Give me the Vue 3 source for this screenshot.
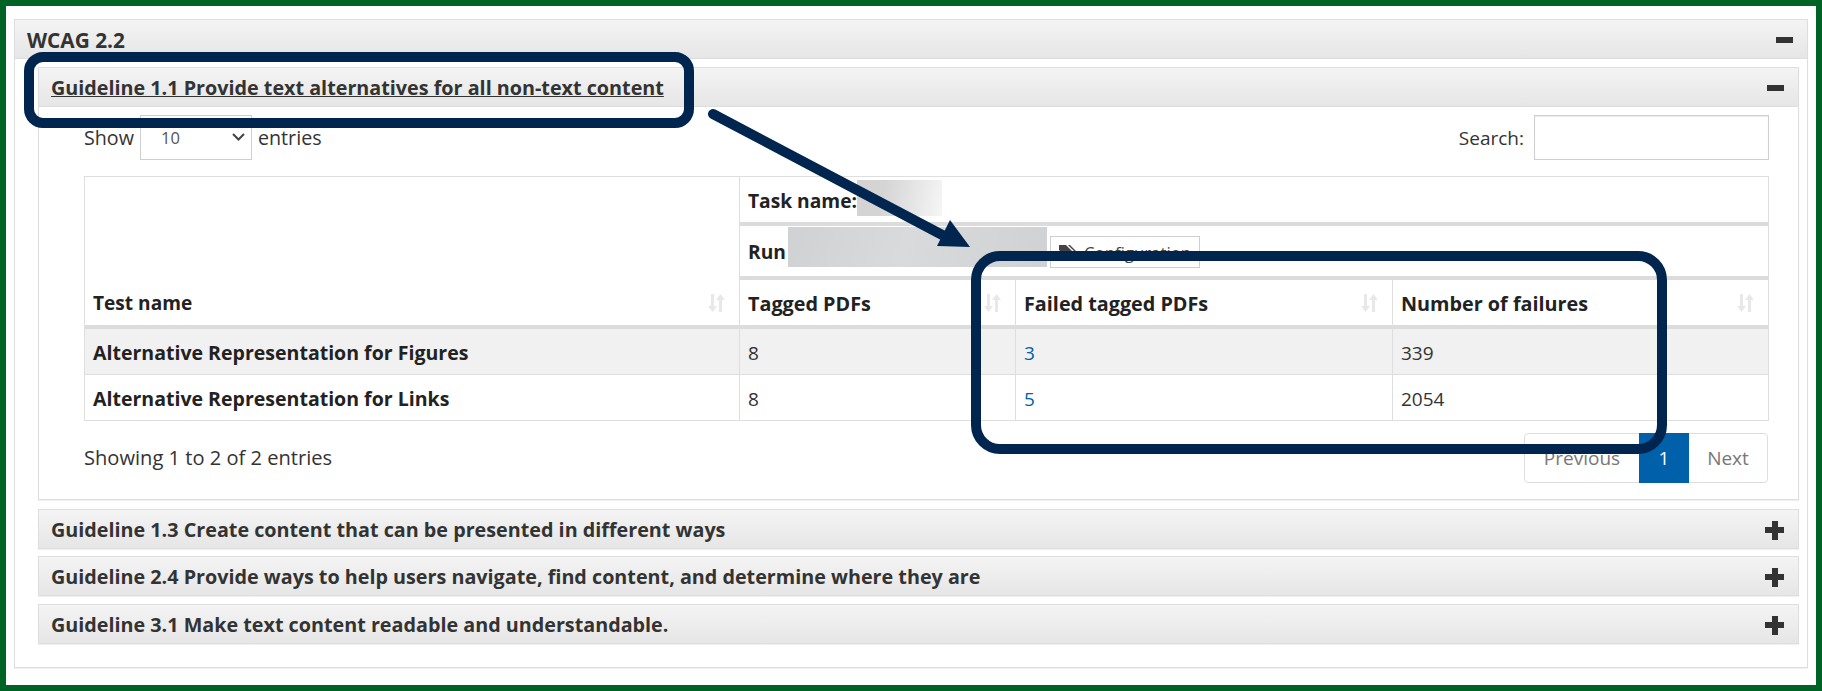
<script setup>
const closedPanels = [
  'Guideline 1.3 Create content that can be presented in different ways',
  'Guideline 2.4 Provide ways to help users navigate, find content, and determine where they are',
  'Guideline 3.1 Make text content readable and understandable.',
]

const rows = [
  { name: 'Alternative Representation for Figures', tagged: 8, failed: 3, failures: 339 },
  { name: 'Alternative Representation for Links', tagged: 8, failed: 5, failures: 2054 },
]
</script>

<template>
  <div class="page">
    <section class="panel outer">
      <header class="panel-head">
        <h2>WCAG 2.2</h2>
        <span class="minus"></span>
      </header>
      <div class="outer-body">
        <section class="panel inner">
          <header class="panel-head">
            <h3><a class="open-link">Guideline 1.1 Provide text alternatives for all non-text content</a></h3>
            <span class="minus"></span>
          </header>
          <div class="inner-body">
            <div class="controls">
              <label class="length">
                Show
                <span class="select-wrap">
                  <select class="select">
                    <option>10</option>
                  </select>
                  <svg class="chevron" viewBox="0 0 13 8" width="13" height="8">
                    <path d="M1 1l5.500 5.500L12 1" fill="none" stroke="#444" stroke-width="2" />
                  </svg>
                </span>
                entries
              </label>
              <label class="search">
                Search:
                <input class="search-input" type="text" />
              </label>
            </div>

            <table class="results">
              <colgroup>
                <col class="col-a" />
                <col class="col-b" />
                <col class="col-c" />
                <col class="col-d" />
              </colgroup>
              <thead>
                <tr class="task-row">
                  <th rowspan="3" class="test-head">
                    <div class="th-in test-title">
                      Test name
                      <svg class="sort" viewBox="0 0 17 18" width="17" height="18">
                        <path d="M3 0h3v12h3l-4.500 6L0 12h3zM11 18h3V6h3L12.500 0 8 6h3z" fill="#e8e8e8" />
                      </svg>
                    </div>
                  </th>
                  <th colspan="3">
                    <div class="meta">Task name:<span class="blur blur-task"></span></div>
                  </th>
                </tr>
                <tr class="run-row">
                  <th colspan="3">
                    <div class="meta run">
                      <span class="run-label">Run</span>
                      <span class="blur blur-run"></span>
                      <button class="config" type="button">
                        <svg viewBox="0 0 18 14" width="18" height="14">
                          <path d="M0 0h7l7 7-6 6-8-8zM9 0h2l7 7-6 6-1-1 5-5z" fill="#444" />
                        </svg>
                        Configuration
                      </button>
                    </div>
                  </th>
                </tr>
                <tr class="head-row">
                  <th v-for="title in ['Tagged PDFs', 'Failed tagged PDFs', 'Number of failures']" :key="title">
                    <div class="th-in">
                      {{ title }}
                      <svg class="sort" viewBox="0 0 17 18" width="17" height="18">
                        <path d="M3 0h3v12h3l-4.500 6L0 12h3zM11 18h3V6h3L12.500 0 8 6h3z" fill="#e8e8e8" />
                      </svg>
                    </div>
                  </th>
                </tr>
              </thead>
              <tbody>
                <tr v-for="row in rows" :key="row.name">
                  <td class="name">{{ row.name }}</td>
                  <td>{{ row.tagged }}</td>
                  <td><a class="link">{{ row.failed }}</a></td>
                  <td>{{ row.failures }}</td>
                </tr>
              </tbody>
            </table>

            <div class="table-foot">
              <span class="info">Showing 1 to 2 of 2 entries</span>
              <nav class="pager">
                <span class="prev">Previous</span>
                <span class="current">1</span>
                <span class="next">Next</span>
              </nav>
            </div>
          </div>
        </section>

        <section v-for="title in closedPanels" :key="title" class="panel closed">
          <header class="panel-head">
            <h3>{{ title }}</h3>
            <span class="plus"></span>
          </header>
        </section>
      </div>
    </section>

    <!-- annotations drawn on top of the screenshot -->
    <svg class="marks" viewBox="0 0 1822 691" width="1822" height="691">
      <rect x="29" y="57" width="660" height="66" rx="14" fill="none" stroke="#00264f" stroke-width="10" />
      <rect x="976" y="256" width="686" height="193" rx="24" fill="none" stroke="#00264f" stroke-width="10" />
      <path d="M713 114L948 238" fill="none" stroke="#00264f" stroke-width="10" stroke-linecap="round" />
      <path d="M950 220L970 247L937 246z" fill="#00264f" />
    </svg>
  </div>
</template>

<style>
html, body {
  margin: 0;
  background: #fff;
}
</style>

<style scoped>
.page {
  position: relative;
  box-sizing: border-box;
  width: 1822px;
  height: 691px;
  padding: 13px 8px 0;
  border: 6px solid #006325;
  background: #fff;
  overflow: hidden;
  font-family: "Open Sans", "Noto Sans", sans-serif;
  font-size: 19px;
  color: #333;
}

.panel {
  box-sizing: border-box;
}

.outer {
  height: 649px;
  border: 1px solid #dedede;
  border-top: 0;
  box-shadow: 0 1px 1px rgba(0, 0, 0, 0.06);
}

.panel-head {
  box-sizing: border-box;
  display: flex;
  align-items: center;
  justify-content: space-between;
  height: 40px;
  padding: 0 14px 0 12px;
  border: 1px solid #dedede;
  background: linear-gradient(#f4f4f4, #e6e6e6);
}

.outer > .panel-head {
  margin: 0 -1px;
}

.panel-head h2,
.panel-head h3 {
  margin: 1px 0 0;
  font-size: 19.75px;
  font-weight: 700;
  color: #333;
}

.panel-head h2 {
  margin-top: 2px;
  font-size: 20.8px;
}

.open-link {
  text-decoration: underline;
}

.minus {
  width: 17px;
  height: 6px;
  margin-top: 1px;
  background: #333;
}

.plus {
  width: 19px;
  height: 19px;
  margin-top: 2px;
  background:
    linear-gradient(#333, #333) center / 19px 6px no-repeat,
    linear-gradient(#333, #333) center / 6px 19px no-repeat;
}

.outer-body {
  padding: 8px 8px 0 23px;
}

.inner {
  height: 433px;
  border: 1px solid #dedede;
  border-top: 0;
  margin-bottom: 9px;
  box-shadow: 0 1px 1px rgba(0, 0, 0, 0.06);
}

.inner > .panel-head {
  margin: 0 -1px;
}

.closed {
  margin-bottom: 7px;
  box-shadow: 0 1px 1px rgba(0, 0, 0, 0.06);
}

.closed:nth-of-type(3) {
  margin-bottom: 8px;
}

.inner-body {
  padding: 8px 29px 0 45px;
}

.controls {
  display: flex;
  justify-content: space-between;
  height: 45px;
  margin-bottom: 16px;
}

.length,
.search {
  display: flex;
  align-items: center;
}

.length {
  font-size: 19.7px;
}

.select-wrap {
  position: relative;
  display: block;
  margin: 0 6px;
}

.select {
  display: block;
  box-sizing: border-box;
  width: 112px;
  height: 45px;
  padding: 0 0 0 20px;
  border: 1px solid #cfcfcf;
  border-radius: 0;
  background: #fff;
  appearance: none;
  font-family: inherit;
  font-size: 16.5px;
  color: #555;
}

.chevron {
  position: absolute;
  top: 18px;
  right: 7px;
}

.search-input {
  box-sizing: border-box;
  width: 235px;
  height: 45px;
  margin-left: 10px;
  border: 1px solid #cfcfcf;
  box-shadow: inset 0 1px 1px rgba(0, 0, 0, 0.08);
  background: #fff;
}

.results {
  width: 1685px;
  table-layout: fixed;
  border-collapse: separate;
  border-spacing: 0;
  border-top: 1px solid #dedede;
  border-left: 1px solid #dedede;
}

.col-a { width: 655px; }
.col-b { width: 276px; }
.col-c { width: 377px; }
.col-d { width: 376px; }

.results th,
.results td {
  box-sizing: border-box;
  padding: 0 14px 0 8px;
  border-right: 1px solid #dedede;
  text-align: left;
}

.results th {
  border-bottom: 4px solid #dcdcdc;
  font-size: 19.8px;
  font-weight: 700;
  color: #222;
}

.results td {
  height: 46px;
  padding-top: 2px;
  border-bottom: 1px solid #dedede;
  color: #333;
}

.results tbody tr:first-child {
  background: #f1f1f1;
}

.results td.name {
  font-size: 19.55px;
  font-weight: 700;
  color: #222;
}

.task-row th { height: 49px; }
.run-row th { height: 54px; }
.head-row th { height: 49px; }

.test-head {
  vertical-align: bottom;
}

.test-head .th-in {
  height: 45px;
}

.test-title {
  font-size: 19.1px;
}

.th-in {
  display: flex;
  align-items: center;
  justify-content: space-between;
  padding-top: 1px;
}

.sort {
  flex: none;
}

.meta {
  display: flex;
  align-items: center;
  padding-top: 2px;
  font-size: 19.2px;
}

.blur {
  display: block;
}

.blur-task {
  width: 85px;
  height: 36px;
  margin-top: -6px;
  background: linear-gradient(100deg, #d4d4d4 30%, #f6f6f6);
}

.run {
  align-items: flex-start;
  height: 50px;
  padding-top: 0;
}

.run-label {
  width: 40px;
  margin-top: 12px;
}

.blur-run {
  width: 259px;
  height: 40px;
  margin-top: 1px;
  background: linear-gradient(110deg, #cfd1d2, #d9dadb 45%, #cfd1d3);
}

.config {
  display: flex;
  align-items: center;
  gap: 7px;
  box-sizing: border-box;
  width: 150px;
  height: 32px;
  margin: 10px 0 0 3px;
  padding: 0 0 0 8px;
  border: 1px solid #cfcfcf;
  background: #fff;
  font-family: inherit;
  font-size: 16.8px;
  color: #444;
}

.link {
  color: #0060a8;
}

.table-foot {
  display: flex;
  align-items: flex-start;
  justify-content: space-between;
  margin: 12px 1px 0 0;
}

.info {
  margin-top: 11px;
  font-size: 20.1px;
}

.pager {
  display: flex;
  height: 50px;
  box-sizing: border-box;
  border: 1px solid #dedede;
  border-radius: 4px;
  color: #777;
}

.pager span {
  display: flex;
  align-items: center;
  justify-content: center;
}

.prev { width: 114px; }
.next { width: 78px; }

.current {
  width: 50px;
  margin: -1px 0;
  background: #0060aa;
  color: #fff;
}

.marks {
  position: absolute;
  top: -6px;
  left: -6px;
  pointer-events: none;
}
</style>
